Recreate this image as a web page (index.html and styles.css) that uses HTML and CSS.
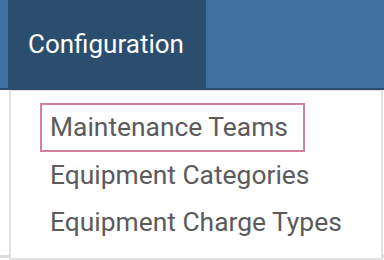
FILE: index.html
```html
<!DOCTYPE html>
<html>
<head>
<meta charset="utf-8">
<link rel="stylesheet" href="styles.css">
</head>
<body>
<nav class="navbar">
  <div class="nav-item active">Configuration</div>
</nav>
<div class="page">
  <div class="page-line"></div>
  <ul class="dropdown">
    <li class="item"><span class="link focused">Maintenance Teams</span></li>
    <li class="item"><span class="link">Equipment Categories</span></li>
    <li class="item"><span class="link">Equipment Charge Types</span></li>
  </ul>
</div>
</body>
</html>
```
FILE: styles.css
```css
html, body {
  margin: 0;
  padding: 0;
  background: #ffffff;
  font-family: Roboto, "Noto Sans", sans-serif;
}
.navbar {
  display: flex;
  height: 88px;
  padding-left: 8px;
  background: #3e6f9e;
  border-bottom: 2px solid #2c4d6c;
}
.nav-item {
  display: flex;
  align-items: center;
  width: 178px;
  padding-left: 20px;
  color: #ffffff;
  font-size: 26px;
  background: #2b4e6f;
}
.page {
  position: relative;
  height: 170px;
}
.page-line {
  position: absolute;
  left: 0;
  right: 0;
  top: 165px;
  height: 3px;
  background: #dcdcdc;
}
.dropdown {
  position: absolute;
  top: 0;
  left: 9px;
  width: 370px;
  margin: 0;
  padding: 12px 0 12px 0;
  list-style: none;
  background: #ffffff;
  border: 2px solid #e2e2e2;
  border-top: 1px solid #dedede;
}
.item {
  height: 47.5px;
  padding-left: 29px;
}
.link {
  display: inline-block;
  height: 45px;
  line-height: 45px;
  padding: 0 15px 0 8px;
  font-size: 26.4px;
  color: #5b5b5b;
  border: 2px solid transparent;
}
.link.focused {
  border-color: #d4809c;
}
```
